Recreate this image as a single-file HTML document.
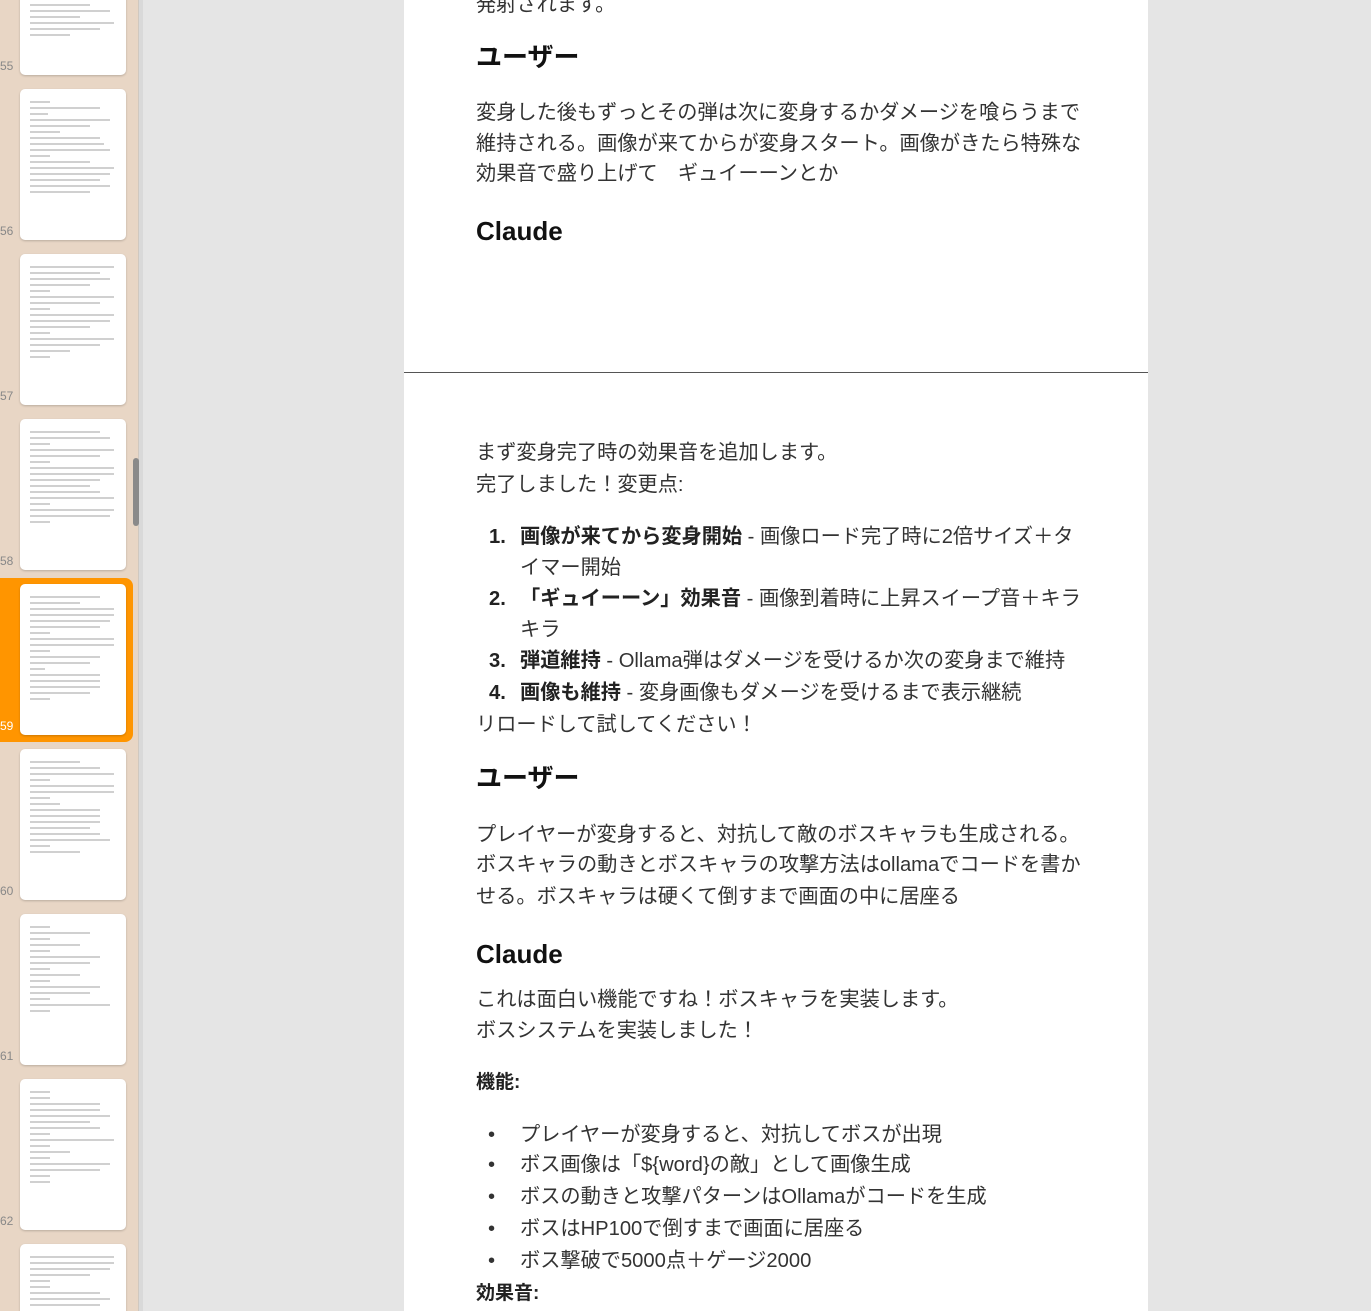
<!DOCTYPE html>
<html style="height:1311px;overflow:hidden"><head><meta charset="utf-8"><style>
body{margin:0;width:1371px;height:1311px;overflow:hidden;background:#e5e5e5;font-family:"Liberation Sans","Noto Sans CJK JP",sans-serif;position:relative}
#side{position:absolute;left:0;top:0;width:138px;height:1311px;background:#e8d6c5;border-right:1px solid #cfc8c0}
#sidebar2{position:absolute;left:139px;top:0;width:4px;height:1311px;background:#d9d9d9}
.th{position:absolute;left:20px;width:106px;height:151px;background:#fff;border-radius:5px;box-shadow:0 1px 2px rgba(0,0,0,.2);overflow:hidden}
.th i{display:block;height:2px;background:#d0d0d0;margin:4px 0 0 10px}
.num{position:absolute;left:0;font-size:12px;color:#888}
#sel{position:absolute;left:0;top:578px;width:133px;height:164px;background:#ff9500;border-radius:0 8px 8px 0}
#scroll{position:absolute;left:133px;top:458px;width:6px;height:68px;background:#8a8a8a;border-radius:3px}
#page{position:absolute;left:404px;top:0;width:744px;height:1311px;background:#fff}
#brk{position:absolute;left:404px;top:372px;width:744px;height:1px;background:#555}
.t{position:absolute;left:476px;font-size:20.2px;color:#333;white-space:nowrap;line-height:30px}
.h{font-weight:bold;font-size:26px;color:#111}
.h3{font-weight:bold;font-size:19px;color:#222}
b{color:#222}
</style></head><body>
<div id="side"></div><div id="sidebar2"></div>
<div id="sel"></div>
<div id="scroll"></div>
<div class="th" style="top:-76px"><i style="width:60px;margin-top:80px"></i><i style="width:80px"></i><i style="width:50px"></i><i style="width:84px"></i><i style="width:70px"></i><i style="width:40px"></i></div>
<div class="num" style="top:59px">55</div>
<div class="th" style="top:89px"><i style="width:20px;margin-top:12px"></i><i style="width:70px"></i><i style="width:18px"></i><i style="width:80px"></i><i style="width:60px"></i><i style="width:30px"></i><i style="width:70px"></i><i style="width:74px"></i><i style="width:80px"></i><i style="width:20px"></i><i style="width:60px"></i><i style="width:84px"></i><i style="width:80px"></i><i style="width:70px"></i><i style="width:80px"></i><i style="width:60px"></i></div>
<div class="num" style="top:224px">56</div>
<div class="th" style="top:254px"><i style="width:84px;margin-top:12px"></i><i style="width:70px"></i><i style="width:80px"></i><i style="width:60px"></i><i style="width:20px"></i><i style="width:84px"></i><i style="width:70px"></i><i style="width:20px"></i><i style="width:84px"></i><i style="width:80px"></i><i style="width:60px"></i><i style="width:20px"></i><i style="width:84px"></i><i style="width:70px"></i><i style="width:40px"></i><i style="width:20px"></i></div>
<div class="num" style="top:389px">57</div>
<div class="th" style="top:419px"><i style="width:70px;margin-top:12px"></i><i style="width:80px"></i><i style="width:20px"></i><i style="width:84px"></i><i style="width:70px"></i><i style="width:20px"></i><i style="width:84px"></i><i style="width:84px"></i><i style="width:70px"></i><i style="width:60px"></i><i style="width:70px"></i><i style="width:84px"></i><i style="width:20px"></i><i style="width:84px"></i><i style="width:80px"></i><i style="width:20px"></i></div>
<div class="num" style="top:554px">58</div>
<div class="th" style="top:584px"><i style="width:70px;margin-top:12px"></i><i style="width:50px"></i><i style="width:84px"></i><i style="width:84px"></i><i style="width:80px"></i><i style="width:70px"></i><i style="width:20px"></i><i style="width:84px"></i><i style="width:84px"></i><i style="width:20px"></i><i style="width:70px"></i><i style="width:60px"></i><i style="width:15px"></i><i style="width:70px"></i><i style="width:70px"></i><i style="width:70px"></i><i style="width:60px"></i><i style="width:20px"></i></div>
<div class="num" style="top:719px;color:#fff">59</div>
<div class="th" style="top:749px"><i style="width:50px;margin-top:12px"></i><i style="width:70px"></i><i style="width:84px"></i><i style="width:20px"></i><i style="width:84px"></i><i style="width:84px"></i><i style="width:20px"></i><i style="width:30px"></i><i style="width:70px"></i><i style="width:70px"></i><i style="width:70px"></i><i style="width:60px"></i><i style="width:70px"></i><i style="width:80px"></i><i style="width:20px"></i><i style="width:50px"></i></div>
<div class="num" style="top:884px">60</div>
<div class="th" style="top:914px"><i style="width:20px;margin-top:12px"></i><i style="width:60px"></i><i style="width:20px"></i><i style="width:50px"></i><i style="width:20px"></i><i style="width:70px"></i><i style="width:60px"></i><i style="width:20px"></i><i style="width:50px"></i><i style="width:20px"></i><i style="width:70px"></i><i style="width:60px"></i><i style="width:20px"></i><i style="width:80px"></i><i style="width:20px"></i></div>
<div class="num" style="top:1049px">61</div>
<div class="th" style="top:1079px"><i style="width:20px;margin-top:12px"></i><i style="width:20px"></i><i style="width:70px"></i><i style="width:70px"></i><i style="width:80px"></i><i style="width:60px"></i><i style="width:70px"></i><i style="width:20px"></i><i style="width:84px"></i><i style="width:20px"></i><i style="width:40px"></i><i style="width:20px"></i><i style="width:80px"></i><i style="width:70px"></i><i style="width:20px"></i><i style="width:20px"></i></div>
<div class="num" style="top:1214px">62</div>
<div class="th" style="top:1244px;height:67px;border-radius:5px 5px 0 0"><i style="width:84px;margin-top:12px"></i><i style="width:84px"></i><i style="width:80px"></i><i style="width:60px"></i><i style="width:20px"></i><i style="width:20px"></i><i style="width:70px"></i><i style="width:80px"></i><i style="width:70px"></i></div>

<div id="page"></div><div id="brk"></div>
<div class="t" style="top:-10px">発射されます。</div>
<div class="t h" style="top:42px">ユーザー</div>
<div class="t" style="top:98px">変身した後もずっとその弾は次に変身するかダメージを喰らうまで</div>
<div class="t" style="top:129px">維持される。画像が来てからが変身スタート。画像がきたら特殊な</div>
<div class="t" style="top:159px">効果音で盛り上げて　ギュイーーンとか</div>
<div class="t h" style="top:216px">Claude</div>

<div class="t" style="top:438px">まず変身完了時の効果音を追加します。</div>
<div class="t" style="top:470px">完了しました！変更点:</div>
<div class="t" style="top:522px;left:489px"><b>1.</b></div><div class="t" style="top:522px;left:520px"><b>画像が来てから変身開始</b> - 画像ロード完了時に2倍サイズ＋タ</div>
<div class="t" style="top:553px;left:520px">イマー開始</div>
<div class="t" style="top:584px;left:489px"><b>2.</b></div><div class="t" style="top:584px;left:520px"><b>「ギュイーーン」効果音</b> - 画像到着時に上昇スイープ音＋キラ</div>
<div class="t" style="top:615px;left:520px">キラ</div>
<div class="t" style="top:646px;left:489px"><b>3.</b></div><div class="t" style="top:646px;left:520px"><b>弾道維持</b> - Ollama弾はダメージを受けるか次の変身まで維持</div>
<div class="t" style="top:678px;left:489px"><b>4.</b></div><div class="t" style="top:678px;left:520px"><b>画像も維持</b> - 変身画像もダメージを受けるまで表示継続</div>
<div class="t" style="top:710px">リロードして試してください！</div>
<div class="t h" style="top:763px">ユーザー</div>
<div class="t" style="top:820px">プレイヤーが変身すると、対抗して敵のボスキャラも生成される。</div>
<div class="t" style="top:850px">ボスキャラの動きとボスキャラの攻撃方法はollamaでコードを書か</div>
<div class="t" style="top:882px">せる。ボスキャラは硬くて倒すまで画面の中に居座る</div>
<div class="t h" style="top:939px">Claude</div>
<div class="t" style="top:985px">これは面白い機能ですね！ボスキャラを実装します。</div>
<div class="t" style="top:1016px">ボスシステムを実装しました！</div>
<div class="t h3" style="top:1068px">機能:</div>
<div class="t" style="top:1120px;left:488px">•</div><div class="t" style="top:1120px;left:520px">プレイヤーが変身すると、対抗してボスが出現</div>
<div class="t" style="top:1150px;left:488px">•</div><div class="t" style="top:1150px;left:520px">ボス画像は「${word}の敵」として画像生成</div>
<div class="t" style="top:1182px;left:488px">•</div><div class="t" style="top:1182px;left:520px">ボスの動きと攻撃パターンはOllamaがコードを生成</div>
<div class="t" style="top:1214px;left:488px">•</div><div class="t" style="top:1214px;left:520px">ボスはHP100で倒すまで画面に居座る</div>
<div class="t" style="top:1246px;left:488px">•</div><div class="t" style="top:1246px;left:520px">ボス撃破で5000点＋ゲージ2000</div>
<div class="t h3" style="top:1279px">効果音:</div>
</body></html>
